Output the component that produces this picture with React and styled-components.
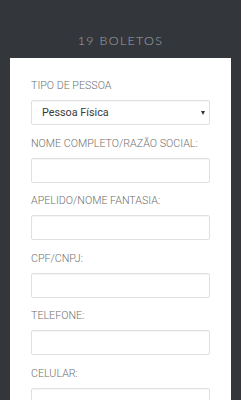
import React from 'react';
import styled, { createGlobalStyle } from 'styled-components';

const GlobalStyle = createGlobalStyle`
  html, body {
    margin: 0;
    padding: 0;
    background: #33373c;
    height: 100%;
    overflow: hidden;
  }
  * { box-sizing: border-box; }
`

const Page = styled.div`
  display: flex;
  flex-direction: column;
  width: 241px;
  height: 400px;
  overflow: hidden;
  background: #33373c;
  font-family: Roboto, 'Liberation Sans', sans-serif;
`

const Title = styled.h1`
  flex-shrink: 0;
  margin: 0;
  padding-top: 34px;
  height: 58px;
  text-align: center;
  font-family: Lato, 'Open Sans', sans-serif;
  font-weight: 300;
  font-size: 12.5px;
  line-height: 14px;
  letter-spacing: 1.3px;
  color: #a2a6ab;
`

const Card = styled.div`
  flex: 1 0 auto;
  margin: 0 10px;
  background: #ffffff;
  padding: 22px 21px 0 21px;
  display: flex;
  flex-direction: column;
  gap: 12.5px;
`

const Field = styled.div`
  display: flex;
  flex-direction: column;
  gap: 8px;
`

const Label = styled.label`
  font-size: 10.7px;
  line-height: 12px;
  font-weight: 300;
  color: #6f6f6f;
  text-transform: uppercase;
`

const Box = styled.div`
  height: 25px;
  flex-shrink: 0;
  border: 1px solid #e0e0e0;
  border-radius: 2px;
  background: #fff;
  box-shadow: inset 0 1px 1px rgba(0,0,0,0.04);
  display: flex;
  align-items: center;
  justify-content: space-between;
  padding: 0 4px 0 10px;
  font-size: 10.8px;
  color: #3a3a3a;
`

const Caret = styled.span`
  width: 0;
  height: 0;
  border-left: 2.5px solid transparent;
  border-right: 2.5px solid transparent;
  border-top: 4px solid #333;
`

const fields = [
  'Nome completo/razão social:',
  'Apelido/nome fantasia:',
  'CPF/CNPJ:',
  'Telefone:',
  'Celular:',
];

export default function App() {
  return (
    <Page>
      <GlobalStyle />
      <Title>19 BOLETOS</Title>
      <Card>
        <Field>
          <Label>Tipo de pessoa</Label>
          <Box>
            <span>Pessoa Física</span>
            <Caret />
          </Box>
        </Field>
        {fields.map((f) => (
          <Field key={f}>
            <Label>{f}</Label>
            <Box />
          </Field>
        ))}
      </Card>
    </Page>
  );
}
